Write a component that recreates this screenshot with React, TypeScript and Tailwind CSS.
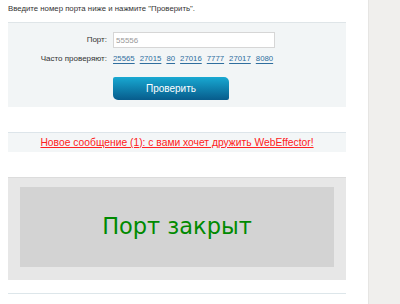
import React from "react";

const ports = ["25565", "27015", "80", "27016", "7777", "27017", "8080"];

const App = () => {
  return (
    <div className="w-[400px] h-[304px] overflow-hidden flex bg-white font-['Liberation_Sans',Arial,sans-serif]">
      <div className="w-[368px] shrink-0 pl-2 pr-[22px]">
        <p className="text-[7.8px] leading-[10px] text-[#333] pt-[4px] h-[22px]">
          Введите номер порта ниже и нажмите "Проверить".
        </p>

        {/* check form */}
        <div className="bg-[#f2f5f6] border-t border-[#dfe5e8] h-[85px] pt-[9px]">
          <div className="flex items-center h-[16px]">
            <span className="w-[99px] text-right text-[8px] text-[#333]">Порт:</span>
            <input
              defaultValue="55556"
              className="ml-[6px] w-[162px] h-[16px] bg-white border border-[#d6d6d6] px-[2px] text-[8px] text-[#999] outline-none"
            />
          </div>
          <div className="flex items-center mt-[4px] h-[14px]">
            <span className="w-[99px] text-right text-[8px] text-[#333]">Часто проверяют:</span>
            <div className="ml-[6px] flex gap-[5px]">
              {ports.map((p) => (
                <a key={p} href="#" className="text-[7.8px] text-[#2f6e9e] underline underline-offset-2 decoration-[#2f6e9e]">
                  {p}
                </a>
              ))}
            </div>
          </div>
          <button className="ml-[105px] mt-[11px] w-[116px] h-[23px] rounded-tr-[5px] rounded-bl-[5px] rounded-tl-[2px] rounded-br-[2px] bg-gradient-to-b from-[#19a9d2] to-[#085c8c] text-white text-[10px] flex items-center justify-center">
            Проверить
          </button>
        </div>

        {/* message bar */}
        <div className="mt-[25px] h-[20px] bg-[#f3f6f7] border-t border-[#dde5ea] flex items-center justify-center">
          <a href="#" className="text-[10.3px] text-[#ff2020] underline">
            Новое сообщение (1): с вами хочет дружить WebEffector!
          </a>
        </div>

        {/* result */}
        <div className="mt-[25px] h-[103px] bg-[#e7e7e7] border-t border-[#dcdcdc] px-[12px] pt-[9px]">
          <div className="h-[80px] bg-[#d3d3d3] flex items-center justify-center">
            <span className="text-[22.5px] text-[#008a00] font-['DejaVu_Sans',sans-serif]">Порт закрыт</span>
          </div>
        </div>

        <div className="mt-[13px] border-t border-[#dde6ea]" />
      </div>
      <div className="flex-1 bg-[#f0efed] border-l border-[#e6e5e3]" />
    </div>
  );
};

export default App;
